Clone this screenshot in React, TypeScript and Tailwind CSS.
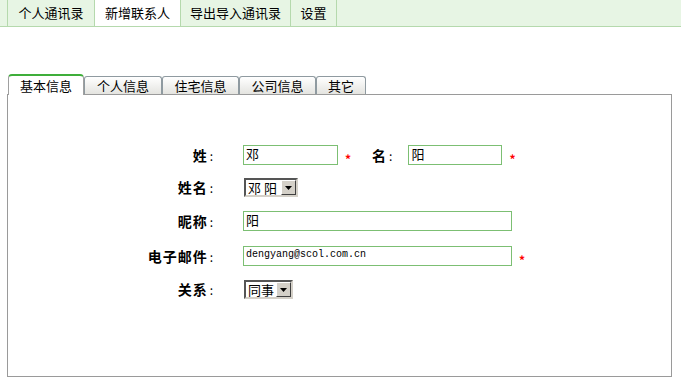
import React from "react";

const font = { fontFamily: '"Noto Sans CJK SC", "Noto Sans", sans-serif' };

function Star() {
  return <span className="mt-[8px] text-[12px] font-bold leading-none text-[#ff0000]">*</span>;
}

function Input({ w, value, mono }: { w: number; value: string; mono?: boolean }) {
  return (
    <div
      className="h-[20px] border border-[#7cbf73] bg-white px-[2px] leading-[16px] text-black"
      style={{ width: w, fontFamily: mono ? '"Liberation Mono", monospace' : undefined, fontSize: mono ? 10 : 13 }}
    >
      {value}
    </div>
  );
}

function Select({ w, value }: { w: number; value: string }) {
  return (
    <div
      className="flex h-[19px] items-stretch border-2 border-t-[#555] border-l-[#555] border-b-[#d4d0c8] border-r-[#d4d0c8] bg-white"
      style={{ width: w }}
    >
      <div className="flex-1 pl-[2px] text-[13px] leading-[15px] text-black">{value}</div>
      <div className="flex w-[15px] items-center justify-center border border-t-[#fff] border-l-[#fff] border-b-[#404040] border-r-[#404040] bg-[#d4d0c8]">
        <svg width="7" height="4" viewBox="0 0 7 4">
          <path d="M0 0h7L3.5 4z" fill="#000" />
        </svg>
      </div>
    </div>
  );
}

function Label({ text }: { text: string }) {
  return (
    <div className="w-[206px] shrink-0 text-right text-[14px] font-bold tracking-[1px] text-black">
      {text}
      <span className="ml-[2px] text-[12px] font-normal">:</span>
    </div>
  );
}

export default function App() {
  const topItems = ["个人通讯录", "新增联系人", "导出导入通讯录", "设置"];
  const widths = [87, 86, 110, 46];
  const tabs = [
    { t: "基本信息", w: 76 },
    { t: "个人信息", w: 78 },
    { t: "住宅信息", w: 77 },
    { t: "公司信息", w: 77 },
    { t: "其它", w: 50 },
  ];
  return (
    <div className="h-[384px] w-[681px] overflow-hidden bg-white" style={font}>
      {/* top nav */}
      <div className="flex h-[27px] border-b border-[#b5d9ad] bg-[#e7f5e4]">
        <div className="w-[8px] border-r border-[#b5d9ad]" />
        {topItems.map((t, i) => (
          <div
            key={t}
            className={`flex items-center justify-center border-r border-[#b5d9ad] text-[13px] text-black ${
              i === 1 ? "bg-white" : ""
            }`}
            style={{ width: widths[i] }}
          >
            {t}
          </div>
        ))}
      </div>

      {/* tabs */}
      <div className="mt-[47px] flex items-end pl-[8px]">
        {tabs.map((tab, i) =>
          i === 0 ? (
            <div
              key={tab.t}
              className="relative z-10 -mb-px flex h-[21px] items-center justify-center rounded-t-[4px] border-x border-t-2 border-x-[#a0a0a0] border-t-[#3fae3a] bg-white pt-[1px] text-[13px] text-black"
              style={{ width: tab.w }}
            >
              {tab.t}
            </div>
          ) : (
            <div
              key={tab.t}
              className="flex h-[18px] items-center justify-center rounded-t-[3px] border border-b-0 border-[#8f9aa0] bg-gradient-to-b from-white to-[#e4e4e0] text-[13px] text-black"
              style={{ width: tab.w }}
            >
              {tab.t}
            </div>
          )
        )}
      </div>

      {/* panel */}
      <div className="ml-[7px] h-[283px] w-[665px] border border-[#9a9a9a] pt-[50px]">
        <div className="flex h-[20px] items-center">
          <Label text="姓" />
          <div className="ml-[29px]">
            <Input w={95} value="邓" />
          </div>
          <div className="ml-[7px] flex h-[20px] items-start">
            <Star />
          </div>
          <div className="ml-[21px] text-[14px] font-bold">
            名<span className="ml-[3px] text-[12px] font-normal">:</span>
          </div>
          <div className="ml-[16px]">
            <Input w={94} value="阳" />
          </div>
          <div className="ml-[7px] flex h-[20px] items-start">
            <Star />
          </div>
        </div>

        <div className="mt-[13px] flex h-[19px] items-center">
          <Label text="姓名" />
          <div className="ml-[30px]">
            <Select w={54} value="邓 阳" />
          </div>
        </div>

        <div className="mt-[14px] flex h-[20px] items-center">
          <Label text="昵称" />
          <div className="ml-[29px]">
            <Input w={269} value="阳" />
          </div>
        </div>

        <div className="mt-[15px] flex h-[20px] items-center">
          <Label text="电子邮件" />
          <div className="ml-[29px]">
            <Input w={269} value="dengyang@scol.com.cn" mono />
          </div>
          <div className="ml-[7px] flex h-[20px] items-start">
            <Star />
          </div>
        </div>

        <div className="mt-[14px] flex h-[19px] items-center">
          <Label text="关系" />
          <div className="ml-[30px]">
            <Select w={49} value="同事" />
          </div>
        </div>
      </div>
    </div>
  );
}
